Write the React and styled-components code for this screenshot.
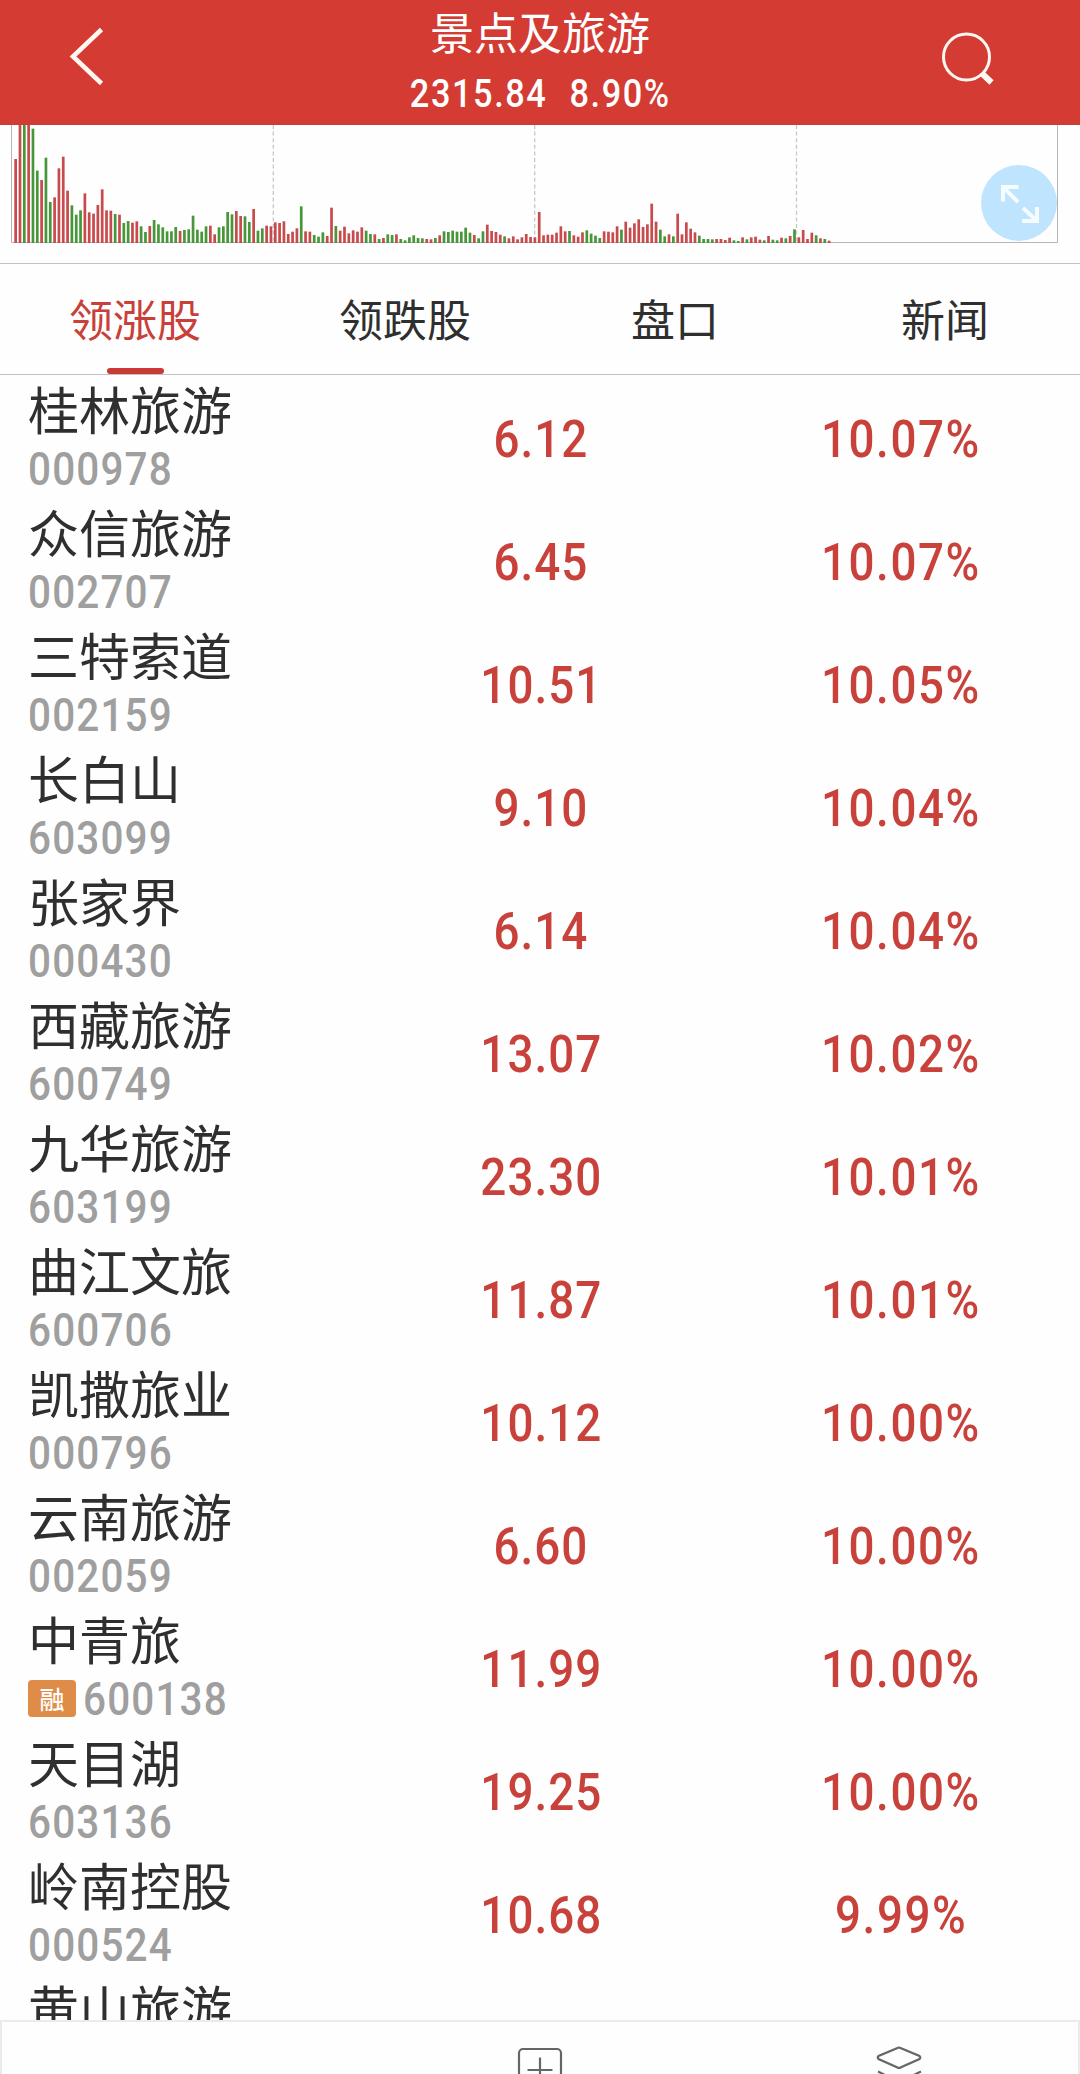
import styled, { createGlobalStyle } from "styled-components";

const GlobalStyle = createGlobalStyle`
  * {
    box-sizing: border-box;
  }

  body {
    margin: 0;
    background: #fefefe;
    font-family: Roboto, "Noto Sans CJK SC", sans-serif;
  }
`;

const Screen = styled.div`
  width: 1080px;
  height: 2074px;
  display: flex;
  flex-direction: column;
  overflow: hidden;
  background: #fefefe;
`;

const Header = styled.header`
  height: 125px;
  flex: none;
  display: grid;
  grid-template-columns: 240px 1fr 240px;
  background: #d33b33;
  border-bottom: 1px solid #c0413a;
  color: #fff;
`;

const HeaderIcon = styled.svg`
  width: 240px;
  height: 124px;
  fill: none;
  stroke: #fff8f2;
`;

const Heading = styled.div`
  display: flex;
  flex-direction: column;
  align-items: center;
`;

const Title = styled.h1`
  margin: 0;
  height: 64px;
  line-height: 63px;
  font-family: "Noto Sans CJK SC", sans-serif;
  font-size: 44px;
  font-weight: 400;
`;

const Numeric = styled.span`
  display: inline-block;
  font-family: Roboto, sans-serif;
  font-weight: 500;
  white-space: pre;
  transform: scaleX(0.88);
`;

const IndexValue = styled(Numeric)`
  height: 60px;
  line-height: 60px;
  font-size: 39px;
  letter-spacing: 1.8px;
  word-spacing: 1px;
`;

const ChartPanel = styled.section`
  position: relative;
  height: 138px;
  flex: none;
`;

const ChartSvg = styled.svg`
  display: block;
`;

const ExpandButton = styled.button`
  position: absolute;
  top: 40px;
  left: 981px;
  width: 76px;
  height: 76px;
  padding: 0;
  border: 0;
  border-radius: 50%;
  background: #bfe4fd;

  svg {
    display: block;
    fill: none;
    stroke: #f6fbff;
    stroke-width: 4;
  }
`;

const Tabs = styled.nav`
  height: 112px;
  flex: none;
  display: grid;
  grid-template-columns: repeat(4, 1fr);
  border-top: 1px solid #c3c3c3;
  border-bottom: 1px solid #c3c3c3;
`;

const Tab = styled.div`
  display: flex;
  flex-direction: column;
  align-items: center;
  justify-content: space-between;
  line-height: 108px;
  font-family: "Noto Sans CJK SC", sans-serif;
  font-size: 44px;
  color: ${({ $active }) => ($active ? "#c93f39" : "#2f2f2f")};

  &::after {
    content: "";
    width: 57px;
    height: 6px;
    flex: none;
    border-radius: 3px;
    background: ${({ $active }) => ($active ? "#c93a36" : "transparent")};
  }
`;

const TabLabel = styled.span`
  height: 104px;
`;

const List = styled.main`
  flex: 1;
  min-height: 0;
  padding-top: 3px;
`;

const Row = styled.div`
  height: 123px;
  display: grid;
  grid-template-columns: repeat(3, 360px);
  align-items: center;
`;

const Stock = styled.div`
  padding-left: 28px;
`;

const Name = styled.div`
  height: 59px;
  line-height: 60px;
  font-family: "Noto Sans CJK SC", sans-serif;
  font-size: 51px;
  color: #2f2f2f;
`;

const CodeLine = styled.div`
  height: 64px;
  display: flex;
  align-items: center;
`;

const MarginTag = styled.span`
  width: 48px;
  height: 37px;
  margin: -2px 7px 0 0;
  border-radius: 4px;
  background: #e08c49;
  color: #fff;
  font-family: "Noto Sans CJK SC", sans-serif;
  font-size: 25px;
  font-weight: 500;
  line-height: 37px;
  text-align: center;
`;

const Code = styled(Numeric)`
  font-size: 46px;
  line-height: 64px;
  letter-spacing: 1.3px;
  color: #9f9f9f;
  transform-origin: left center;
`;

const Figure = styled.div`
  display: flex;
  justify-content: center;
`;

const Value = styled(Numeric)`
  font-size: 52px;
  line-height: 64px;
  letter-spacing: ${({ $percent }) => ($percent ? "1.8px" : "1.2px")};
  margin-right: -2px;
  color: #c8413a;
`;

// sits above the list so the last row slides under it
const BottomBar = styled.footer`
  position: relative;
  z-index: 1;
  height: 54px;
  flex: none;
  border: 2px solid #ebebeb;
  border-bottom: 0;
  background: #fefefe;
  display: grid;
  grid-template-columns: 358px 360px 1fr;
  justify-items: center;
  padding-top: 22px;
  overflow: hidden;

  svg {
    fill: none;
    stroke: #666;
    stroke-width: 2.2;
  }
`;

// one entry per minute: r = up, g = down, followed by the height in thirds of a pixel
const volume =
  "r252 r400 g400 r400 g343 g217 r189 g256 g123 r137 r224 r259 r157 g113 g85 g98 r149 r92 r88 r114 " +
  "r161 r98 r97 g87 r85 g60 g66 r61 r65 g50 g33 r51 g69 g56 g47 g35 g35 g48 r36 g39 " +
  "g41 g82 g40 g34 g50 r52 r26 g47 g50 g93 g86 r96 r81 g80 g63 r102 g37 g44 r52 r50 " +
  "r62 r60 r65 r27 r34 r44 g110 r35 r34 g24 g19 g32 r21 r106 g51 r37 r49 r29 r38 r34 " +
  "r47 g37 g27 r26 g12 r15 g26 g24 r26 g12 g8 g17 g23 g15 g14 r12 r11 g15 r23 g35 " +
  "g33 g37 g34 g34 g46 g31 r24 g14 g35 r55 r36 r33 r25 g20 r14 r20 r11 r17 r27 r18 " +
  "r17 r93 r23 r25 r25 r31 r50 r35 g36 r23 r19 r32 g38 g28 g22 g15 r35 r34 r32 r50 " +
  "g40 r64 r46 r59 r71 r48 r56 r118 r64 g40 g20 r26 g20 r88 r26 r62 r43 r32 g22 g12 " +
  "g12 g11 r12 r12 r9 r16 g8 g6 r17 g11 r17 r19 r10 g8 r21 g10 g8 r16 g14 r21 " +
  "g41 r17 r39 r12 r31 g23 r14 g12 r7";

const bars = volume.split(" ").map((item) => ({
  up: item[0] === "r",
  height: Number(item.slice(1)) / 3,
}));

const stocks = [
  { name: "桂林旅游", code: "000978", price: "6.12", change: "10.07%" },
  { name: "众信旅游", code: "002707", price: "6.45", change: "10.07%" },
  { name: "三特索道", code: "002159", price: "10.51", change: "10.05%" },
  { name: "长白山", code: "603099", price: "9.10", change: "10.04%" },
  { name: "张家界", code: "000430", price: "6.14", change: "10.04%" },
  { name: "西藏旅游", code: "600749", price: "13.07", change: "10.02%" },
  { name: "九华旅游", code: "603199", price: "23.30", change: "10.01%" },
  { name: "曲江文旅", code: "600706", price: "11.87", change: "10.01%" },
  { name: "凯撒旅业", code: "000796", price: "10.12", change: "10.00%" },
  { name: "云南旅游", code: "002059", price: "6.60", change: "10.00%" },
  { name: "中青旅", code: "600138", price: "11.99", change: "10.00%", margin: true },
  { name: "天目湖", code: "603136", price: "19.25", change: "10.00%" },
  { name: "岭南控股", code: "000524", price: "10.68", change: "9.99%" },
  { name: "黄山旅游" },
];

function VolumeChart() {
  return (
    <ChartPanel>
      <ChartSvg width="1080" height="138" viewBox="0 0 1080 138">
        {[273.3, 534.7, 796.5].map((x) => (
          <line key={x} x1={x} x2={x} y1="0" y2="117" stroke="#c8c8c8" strokeWidth="1.3" strokeDasharray="4 2.6" />
        ))}
        <path d="M11.5 0V117.5H1057.5V0" fill="none" stroke="#b9b4b4" />
        {bars.map((bar, i) => (
          <rect
            key={i}
            x={14.3 + i * 4.327}
            y={118 - bar.height}
            width="2.7"
            height={bar.height}
            fill={bar.up ? "#c74a4c" : "#47963a"}
          />
        ))}
      </ChartSvg>
      <ExpandButton>
        <svg width="76" height="76" viewBox="0 0 76 76">
          <path d="M37.5 22H22V36.5M22 22L37 37" />
          <path d="M41 56H56V42M56 56L42 43" />
        </svg>
      </ExpandButton>
    </ChartPanel>
  );
}

function StockRow({ stock }) {
  return (
    <Row>
      <Stock>
        <Name>{stock.name}</Name>
        <CodeLine>
          {stock.margin && <MarginTag>融</MarginTag>}
          {stock.code && <Code>{stock.code}</Code>}
        </CodeLine>
      </Stock>
      <Figure>{stock.price && <Value>{stock.price}</Value>}</Figure>
      <Figure>{stock.change && <Value $percent>{stock.change}</Value>}</Figure>
    </Row>
  );
}

function App() {
  return (
    <Screen>
      <GlobalStyle />
      <Header>
        <HeaderIcon viewBox="0 0 240 124">
          <path d="M101.5 29.5L73 56.5L101.5 83.5" strokeWidth="4.6" />
        </HeaderIcon>
        <Heading>
          <Title>景点及旅游</Title>
          <IndexValue>{"2315.84  8.90%"}</IndexValue>
        </Heading>
        <HeaderIcon viewBox="0 0 240 124">
          <circle cx="126.5" cy="57" r="23" strokeWidth="3" />
          <path d="M142.5 74L151.5 82.5" strokeWidth="6" />
        </HeaderIcon>
      </Header>
      <VolumeChart />
      <Tabs>
        {["领涨股", "领跌股", "盘口", "新闻"].map((label, i) => (
          <Tab key={label} $active={i === 0}>
            <TabLabel>{label}</TabLabel>
          </Tab>
        ))}
      </Tabs>
      <List>
        {stocks.map((stock) => (
          <StockRow key={stock.name} stock={stock} />
        ))}
      </List>
      <BottomBar>
        <span />
        <svg width="48" height="48" viewBox="0 0 48 48">
          <rect x="3" y="5" width="42" height="42" rx="4" />
          <path d="M24 13.5V38M11.5 26H36.5" />
        </svg>
        <svg width="48" height="48" viewBox="0 0 48 48">
          <path d="M22.5 4Q24 3 25.5 4L44.5 12Q46 13.500 44.5 15L25.5 23.5Q24 24.500 22.5 23.5L3.5 15Q2 13.500 3.5 12Z" />
          <path d="M3 27.5L24 38L46 27.5" />
        </svg>
      </BottomBar>
    </Screen>
  );
}

export default App;
